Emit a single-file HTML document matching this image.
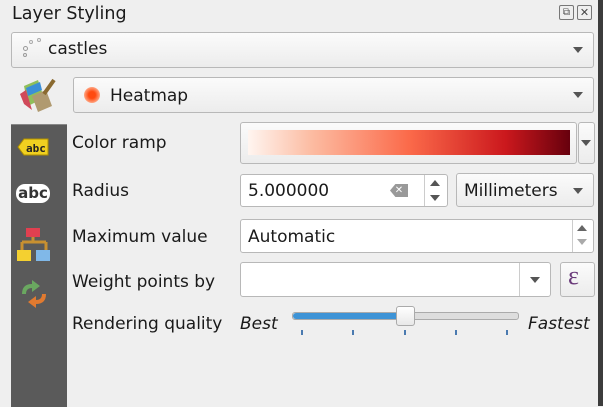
<!DOCTYPE html>
<html><head><style>
body{margin:0;width:603px;height:406px;background:#efefef;font-family:"DejaVu Sans","Liberation Sans",sans-serif;font-size:17px;color:#1a1a1a;position:relative;overflow:hidden}
.a{position:absolute}
.box{position:absolute;border:1px solid #b8b8b8;border-radius:3px;background:linear-gradient(#fbfbfb,#ececec);box-sizing:border-box}
.in{position:absolute;border:1px solid #b8b8b8;border-radius:3px;background:#fff;box-sizing:border-box}
.arr{position:absolute;width:0;height:0;border-left:5px solid transparent;border-right:5px solid transparent;border-top:6px solid #555}
.lbl{position:absolute;left:72px}
</style></head><body>
<div class="a" style="left:12px;top:4px;font-size:17.5px">Layer Styling</div>
<div class="a" style="left:559px;top:5px;width:13px;height:13px;border:1px solid #777;border-radius:2px;font-size:10px;line-height:13px;text-align:center;color:#555">⧉</div>
<div class="a" style="left:577px;top:5px;width:13px;height:13px;border:1px solid #777;border-radius:2px;font-size:11px;line-height:13px;text-align:center;color:#444;font-weight:bold">✕</div>
<div class="a" style="left:598px;top:0;width:5px;height:406px;background:#3c3c3c"></div>

<div class="box" style="left:11px;top:32px;width:583px;height:36px"></div>
<div class="a" style="left:23px;top:46px;width:3px;height:3px;border:1px solid #999;border-radius:50%"></div>
<div class="a" style="left:29px;top:40px;width:2px;height:2px;border:1px solid #aaa;border-radius:50%"></div>
<div class="a" style="left:37px;top:38px;width:2px;height:2px;border:1px solid #aaa;border-radius:50%"></div>
<div class="a" style="left:23px;top:53px;width:2px;height:2px;border:1px solid #999;border-radius:50%"></div>
<div class="a" style="left:48px;top:39px">castles</div>
<div class="arr" style="left:573px;top:47px"></div>

<svg class="a" style="left:18px;top:76px" width="40" height="38" viewBox="0 0 40 38">
<polygon points="6,10 20,4 26,22 10,30" fill="#8fbf5a"/>
<polygon points="2,18 8,14 14,34 6,28" fill="#d04a5a"/>
<polygon points="8,12 22,6 24,14 10,20" fill="#3b8fd6"/>
<polygon points="14,20 28,14 34,30 20,36" fill="#b09a70"/>
<line x1="26" y1="18" x2="36" y2="4" stroke="#8a6a30" stroke-width="4"/>
</svg>
<div class="box" style="left:73px;top:77px;width:521px;height:36px"></div>
<div class="a" style="left:84px;top:87px;width:16px;height:16px;border-radius:50%;background:radial-gradient(#ff4a10 30%,#ffb090 75%,rgba(255,200,180,0) 100%)"></div>
<div class="a" style="left:110px;top:86px">Heatmap</div>
<div class="arr" style="left:573px;top:92px"></div>

<div class="a" style="left:11px;top:124px;width:56px;height:282px;background:#5a5a5a;border-top:1px solid #888"></div>
<svg class="a" style="left:16px;top:137px" width="34" height="20"><polygon points="2,10 8,2 32,2 32,18 8,18" fill="#f0d020" stroke="#b09000"/><text x="10" y="15" font-size="11" font-family="DejaVu Sans Mono" font-weight="bold" fill="#222">abc</text></svg>
<div class="a" style="left:16px;top:184px;width:34px;height:19px;background:#fff;border-radius:9px;color:#333;font-weight:bold;font-size:15px;line-height:18px;text-align:center">abc</div>
<svg class="a" style="left:16px;top:226px" width="36" height="36"><rect x="10" y="2" width="14" height="9" fill="#e04050"/><path d="M17 11v5M6 16h24M6 16v8M30 16v8" stroke="#c89030" stroke-width="3" fill="none"/><rect x="1" y="24" width="14" height="11" fill="#f4d030"/><rect x="20" y="24" width="14" height="11" fill="#80b8e8"/></svg>
<svg class="a" style="left:18px;top:278px" width="32" height="30"><path d="M4 16 Q4 6 14 6 L14 2 L22 8 L14 14 L14 10 Q8 10 8 16Z" fill="#6aa860"/><path d="M28 16 Q28 26 18 26 L18 30 L10 24 L18 18 L18 22 Q24 22 24 16Z" fill="#e07a30"/></svg>

<div class="lbl" style="top:133px">Color ramp</div>
<div class="lbl" style="top:181px">Radius</div>
<div class="lbl" style="top:227px">Maximum value</div>
<div class="lbl" style="top:272px">Weight points by</div>
<div class="lbl" style="top:314px">Rendering quality</div>

<div class="box" style="left:240px;top:122px;width:337px;height:42px"></div>
<div class="a" style="left:248px;top:130px;width:322px;height:25px;background:linear-gradient(to right,#fff5f0,#fcbba1 20%,#fb6a4a 50%,#cb181d 80%,#67000d)"></div>
<div class="box" style="left:578px;top:122px;width:17px;height:42px"></div>
<div class="arr" style="left:581px;top:140px"></div>

<div class="in" style="left:240px;top:174px;width:208px;height:33px"></div>
<div class="a" style="left:248px;top:181px">5.000000</div>
<div class="a" style="left:390px;top:184px;width:18px;height:13px;background:#999;clip-path:polygon(30% 0,100% 0,100% 100%,30% 100%,0 50%);color:#fff;font-size:10px;line-height:13px;text-align:center">✕</div>
<div class="a" style="left:424px;top:175px;width:1px;height:31px;background:#ccc"></div>
<div class="arr" style="left:430px;top:195px;border-top-color:#555"></div>
<div class="a" style="left:430px;top:180px;width:0;height:0;border-left:5px solid transparent;border-right:5px solid transparent;border-bottom:6px solid #555"></div>
<div class="box" style="left:456px;top:173px;width:138px;height:34px"></div>
<div class="a" style="left:464px;top:181px">Millimeters</div>
<div class="arr" style="left:573px;top:188px"></div>

<div class="in" style="left:240px;top:219px;width:354px;height:34px"></div>
<div class="a" style="left:248px;top:227px">Automatic</div>
<div class="a" style="left:572px;top:220px;width:1px;height:32px;background:#ccc"></div>
<div class="a" style="left:577px;top:225px;width:0;height:0;border-left:5px solid transparent;border-right:5px solid transparent;border-bottom:6px solid #666"></div>
<div class="arr" style="left:577px;top:239px;border-top-color:#aaa"></div>

<div class="in" style="left:240px;top:262px;width:311px;height:35px"></div>
<div class="a" style="left:519px;top:263px;width:1px;height:33px;background:#ccc"></div>
<div class="arr" style="left:530px;top:277px"></div>
<div class="box" style="left:560px;top:262px;width:35px;height:35px"></div>
<div class="a" style="left:568px;top:261px;color:#6a3a7a;font-size:26px;font-family:'Liberation Serif',serif">ε</div>

<div class="a" style="left:240px;top:314px;font-style:italic">Best</div>
<div class="a" style="left:528px;top:314px;font-style:italic">Fastest</div>
<div class="a" style="left:292px;top:312px;width:225px;height:6px;border:1px solid #aaa;border-radius:3px;background:#ddd"></div>
<div class="a" style="left:293px;top:313px;width:110px;height:6px;border-radius:3px;background:#3d93d6"></div>
<div class="a" style="left:396px;top:306px;width:17px;height:18px;border:1px solid #aaa;border-radius:3px;background:linear-gradient(#fff,#e8e8e8)"></div>
<div class="a" style="left:301px;top:330px;width:2px;height:5px;background:#4a7ab0"></div>
<div class="a" style="left:352px;top:330px;width:2px;height:5px;background:#4a7ab0"></div>
<div class="a" style="left:404px;top:330px;width:2px;height:5px;background:#4a7ab0"></div>
<div class="a" style="left:455px;top:330px;width:2px;height:5px;background:#4a7ab0"></div>
<div class="a" style="left:506px;top:330px;width:2px;height:5px;background:#4a7ab0"></div>
</body></html>
